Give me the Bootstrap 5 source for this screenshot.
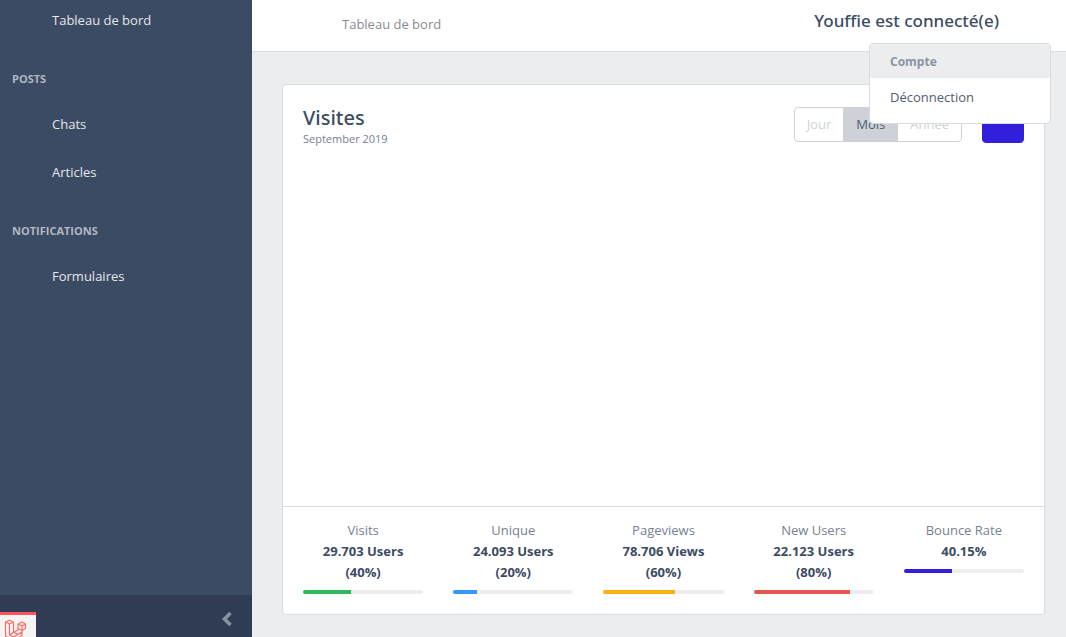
<!DOCTYPE html>
<html lang="fr">
<head>
<meta charset="utf-8">
<meta name="viewport" content="width=device-width, initial-scale=1">
<title>Tableau de bord</title>
<link href="https://cdn.jsdelivr.net/npm/bootstrap@5.3.0/dist/css/bootstrap.min.css" rel="stylesheet">
<style>
body { font-family: "Open Sans", "Noto Sans", sans-serif; font-size: 13px; line-height: 21px; color: #3c4b64; background: #ebedef; }
.side { width: 252px; background: #3c4b64; }
.side .nav-link { color: #e3e6ea; padding: 14px 12px 13px 52px; line-height: 21px; }
.side .nav-link.first-link { padding-top: 10px; }
.side .nav-heading { color: #b1b7c1; font-size: 11px; font-weight: 700; line-height: 16px; padding: 27px 12px 13px; text-transform: uppercase; }
.side-foot { background: #303c54; height: 42px; }
.side-foot .minimizer { color: #8a93a2; padding: 5px 19px 0 0; }
.debug-tab { width: 36px; height: 25px; left: 0; bottom: 0; background: #f5f5f5; border-top: 3px solid #ff5661; padding: 4px 0 0 4px; overflow: hidden; line-height: 0; }
.topbar { height: 52px; border-bottom: 1px solid #d8dbe0; padding: 0 12px 0 90px; }
.topbar .crumb { color: #8a8a94; padding-top: 14px; }
.account { margin-right: 55px; padding-top: 9px; }
.account .user-name { font-family: "Noto Sans", "Open Sans", sans-serif; font-size: 17px; font-weight: 500; line-height: 23px; color: #3c4b64; }
.account .dropdown-menu { top: 43px; right: -52px; width: 182px; padding: 0 0 8px; border: 1px solid #d8dbe0; border-radius: 4px; font-size: 13px; color: #3c4b64; }
.account .dropdown-header { background: #ebedef; color: #8a93a2; font-size: 12px; font-weight: 700; line-height: 18px; padding: 9px 20px 7px; border-radius: 3px 3px 0 0; }
.account .dropdown-item { color: #4f5d73; line-height: 21px; padding: 9px 20px 7px; }
.content-area { padding: 32px 21px 22px 30px; }
.card { border-color: #d8dbe0; border-radius: 4px; color: #3c4b64; }
.card-body { padding: 20px; min-height: 421px; }
.card-title { font-family: "Noto Sans", "Open Sans", sans-serif; font-size: 20px; font-weight: 500; line-height: 26px; }
.month { font-size: 11px; line-height: 16px; color: #768192; }
.chart-tools { gap: 20px; padding-top: 2px; }
.period .btn { font-size: 13px; line-height: 21px; padding: 6px 12px; color: #ced2d8; border-color: #ced2d8; border-radius: 4px; }
.period .btn-check:checked + .btn { background: #ced2d8; border-color: #ced2d8; color: #4f5d73; }
.btn-download { width: 42px; height: 36px; background: #321fdb; border-color: #321fdb; border-radius: 4px; }
.card-footer { background: #fff; border-color: #d8dbe0; padding: 13px 20px 12px; }
.stats { --bs-gutter-x: 30px; }
.stats .stat-name { color: #768192; }
.stats .stat-value { padding: 0 8px; }
.progress { height: 4px; margin: 7px 0 8px; background: #ebedef; border-radius: 4px; }
.bar-green { background: #2eb85c; } .bar-blue { background: #3399ff; } .bar-yellow { background: #f9b115; } .bar-red { background: #e55353; } .bar-indigo { background: #321fdb; }
</style>
</head>
<body>
<div class="d-flex min-vh-100">
  <aside class="side d-flex flex-column flex-shrink-0 position-relative">
    <nav class="nav flex-column flex-nowrap flex-grow-1">
      <a class="nav-link first-link" href="#">Tableau de bord</a>
      <div class="nav-heading">Posts</div>
      <a class="nav-link" href="#">Chats</a>
      <a class="nav-link" href="#">Articles</a>
      <div class="nav-heading">Notifications</div>
      <a class="nav-link" href="#">Formulaires</a>
    </nav>
    <div class="side-foot d-flex">
      <button type="button" class="minimizer btn border-0 ms-auto d-flex align-items-center" aria-label="Réduire le menu">
        <svg width="12" height="16" viewBox="0 0 12 16" fill="none" stroke="currentColor" stroke-width="3.500"><path d="M9.500 2 3.500 8l6 6"/></svg>
      </button>
    </div>
    <a class="debug-tab position-absolute" href="#" aria-label="Debugbar">
      <svg width="23" height="24" viewBox="0 0 23 24" fill="none" stroke="#ff6b64" stroke-width="1.200" stroke-linejoin="round"><path d="M1.500 3 5.500 1.200l4 1.800v10.500l4.500-2.500V5l4-2 3.500 2v4.500l-3.500 2v5L9.500 22l-8-5zM1.500 3l4 2 4-2M5.500 5v11l4-2.500M14 5l4 2 3.500-2M18 7v4.500l-4-2M5.500 16l4 2 8.500-5M9.500 18v4M9.500 13l4.500 2.500"/></svg>
    </a>
  </aside>
  <div class="flex-grow-1">
    <header class="topbar bg-white d-flex justify-content-between align-items-start">
      <a class="crumb text-decoration-none" href="#">Tableau de bord</a>
      <div class="account position-relative">
        <a class="user-name text-decoration-none" href="#" aria-expanded="true">Youffie est connecté(e)</a>
        <div class="dropdown-menu show">
          <div class="dropdown-header">Compte</div>
          <a class="dropdown-item" href="#">Déconnection</a>
        </div>
      </div>
    </header>
    <main class="content-area">
      <div class="card">
        <div class="card-body">
          <div class="d-flex justify-content-between align-items-start">
            <div>
              <h4 class="card-title mb-0">Visites</h4>
              <div class="month">September 2019</div>
            </div>
            <div class="chart-tools d-flex align-items-start">
              <div class="period btn-group" role="group" aria-label="Période">
                <input class="btn-check" type="radio" name="period" id="day"><label class="btn" for="day">Jour</label>
                <input class="btn-check" type="radio" name="period" id="month" checked><label class="btn" for="month">Mois</label>
                <input class="btn-check" type="radio" name="period" id="year"><label class="btn" for="year">Année</label>
              </div>
              <button class="btn btn-download" type="button" aria-label="Télécharger"></button>
            </div>
          </div>
        </div>
        <div class="card-footer">
          <div class="row stats row-cols-5 text-center">
            <div class="col"><div class="stat-name">Visits</div><strong class="stat-value d-block">29.703 Users (40%)</strong><div class="progress"><div class="progress-bar bar-green" style="width:40%"></div></div></div>
            <div class="col"><div class="stat-name">Unique</div><strong class="stat-value d-block">24.093 Users (20%)</strong><div class="progress"><div class="progress-bar bar-blue" style="width:20%"></div></div></div>
            <div class="col"><div class="stat-name">Pageviews</div><strong class="stat-value d-block">78.706 Views (60%)</strong><div class="progress"><div class="progress-bar bar-yellow" style="width:60%"></div></div></div>
            <div class="col"><div class="stat-name">New Users</div><strong class="stat-value d-block">22.123 Users (80%)</strong><div class="progress"><div class="progress-bar bar-red" style="width:80%"></div></div></div>
            <div class="col"><div class="stat-name">Bounce Rate</div><strong class="stat-value d-block">40.15%</strong><div class="progress"><div class="progress-bar bar-indigo" style="width:40%"></div></div></div>
          </div>
        </div>
      </div>
    </main>
  </div>
</div>
<script src="https://cdn.jsdelivr.net/npm/bootstrap@5.3.0/dist/js/bootstrap.bundle.min.js"></script>
</body>
</html>
